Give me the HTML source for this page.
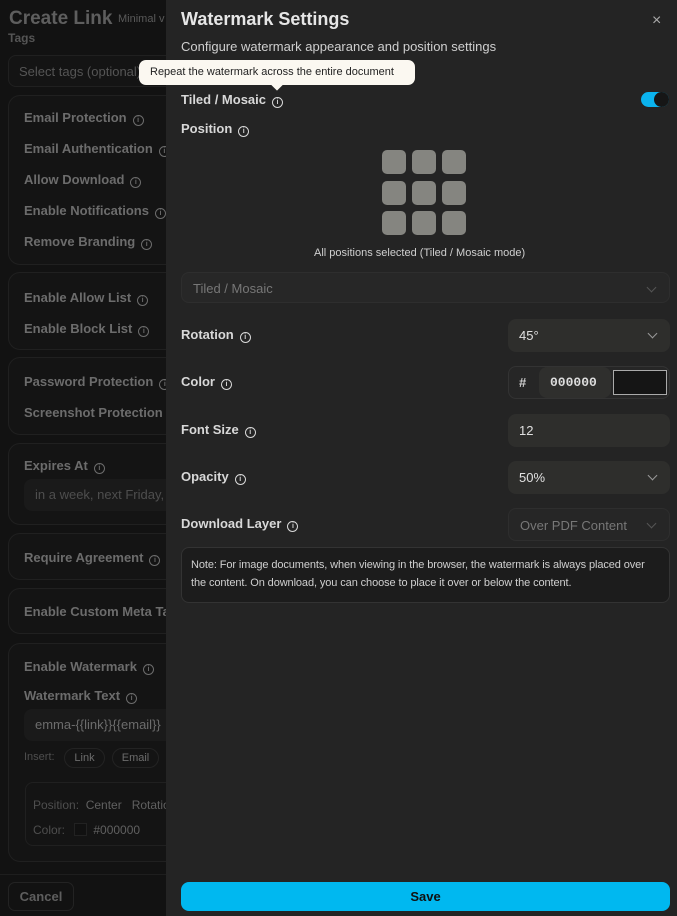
<!DOCTYPE html>
<html><head><meta charset="utf-8"><style>
*{box-sizing:border-box;margin:0;padding:0}
body{width:677px;height:916px;overflow:hidden;background:#121212;font-family:"Liberation Sans",sans-serif;position:relative}
.a{position:absolute;white-space:nowrap}
.card{position:absolute;left:8px;width:200px;border:1px solid #202020;border-radius:12px;background:#141414}
.lt{color:#6c6c6c;font-size:13px;font-weight:bold}
.i{display:inline-block;width:11px;height:11px;border:1px solid currentColor;border-radius:50%;vertical-align:-1px;margin-left:6px;font-size:7px;line-height:9px;text-align:center;font-weight:bold;position:relative;top:-1px}
.panel{position:absolute;left:166px;top:0;width:511px;height:916px;background:#242424}
.pl{color:#d8d8d8;font-size:13px;font-weight:bold}
.sel{position:absolute;left:508px;width:162px;height:33px;border-radius:8px;background:#2e2e2c;color:#e0e0e0;font-size:13px;padding:9px 11px}
.chev{position:absolute;right:14px;top:11px;width:7px;height:7px;border-right:1.3px solid #999;border-bottom:1.3px solid #999;transform:rotate(45deg)}
</style></head><body>
<div class="a" style="left:9px;top:8px;font-size:19px;font-weight:bold;color:#5e5e5e">Create Link</div>
<div class="a" style="left:118px;top:13px;font-size:11px;color:#5a5a5a">Minimal v</div>
<div class="a" style="left:8px;top:31px;font-size:12px;color:#555;font-weight:bold">Tags</div>
<div class="card" style="top:55px;height:32px;border-radius:8px"><div class="a" style="left:10px;top:8px;font-size:13px;color:#555">Select tags (optional)</div></div>
<div class="card" style="top:95px;height:170px">
<div class="a lt" style="left:15px;top:14px">Email Protection<span class="i">i</span></div>
<div class="a lt" style="left:15px;top:45px">Email Authentication<span class="i">i</span></div>
<div class="a lt" style="left:15px;top:76px">Allow Download<span class="i">i</span></div>
<div class="a lt" style="left:15px;top:107px">Enable Notifications<span class="i">i</span></div>
<div class="a lt" style="left:15px;top:138px">Remove Branding<span class="i">i</span></div></div>
<div class="card" style="top:272px;height:78px">
<div class="a lt" style="left:15px;top:17px">Enable Allow List<span class="i">i</span></div>
<div class="a lt" style="left:15px;top:48px">Enable Block List<span class="i">i</span></div></div>
<div class="card" style="top:357px;height:78px">
<div class="a lt" style="left:15px;top:16px">Password Protection<span class="i">i</span></div>
<div class="a lt" style="left:15px;top:47px">Screenshot Protection<span class="i">i</span></div></div>
<div class="card" style="top:443px;height:82px">
<div class="a lt" style="left:15px;top:14px">Expires At<span class="i">i</span></div>
<div class="a" style="left:15px;top:35px;width:190px;height:32px;background:#1a1a1a;border-radius:8px;color:#4e4e4e;font-size:13px;padding:8px 11px">in a week, next Friday, ...</div></div>
<div class="card" style="top:533px;height:47px"><div class="a lt" style="left:15px;top:16px">Require Agreement<span class="i">i</span></div></div>
<div class="card" style="top:588px;height:46px"><div class="a lt" style="left:15px;top:15px">Enable Custom Meta Tags</div></div>
<div class="card" style="top:643px;height:219px">
<div class="a lt" style="left:15px;top:15px">Enable Watermark<span class="i">i</span></div>
<div class="a lt" style="left:15px;top:44px">Watermark Text<span class="i">i</span></div>
<div class="a" style="left:15px;top:65px;width:190px;height:32px;background:#1a1a1a;border-radius:8px;color:#6c6c6c;font-size:13px;padding:8px 11px">emma-{{link}}{{email}}</div>
<div class="a" style="left:15px;top:107px;color:#4e4e4e;font-size:11px">Insert:</div>
<div class="a" style="left:55px;top:104px;width:41px;height:20px;border:1px solid #232323;border-radius:10px;color:#6c6c6c;font-size:11px;text-align:center;line-height:18px">Link</div>
<div class="a" style="left:103px;top:104px;width:47px;height:20px;border:1px solid #232323;border-radius:10px;color:#6c6c6c;font-size:11px;text-align:center;line-height:18px">Email</div>
<div class="a" style="left:16px;top:138px;width:190px;height:64px;border:1px solid #202020;border-radius:8px">
<div class="a" style="left:7px;top:15px;font-size:12px;color:#4e4e4e">Position: <b style="color:#606060;font-weight:normal">&nbsp;Center &nbsp; Rotation</b></div>
<div class="a" style="left:7px;top:40px;font-size:12px;color:#4e4e4e">Color: <span style="display:inline-block;width:13px;height:13px;background:#111;border:1px solid #222;vertical-align:-2px;margin:0 6px"></span><span style="color:#606060">#000000</span></div></div></div>
<div class="a" style="left:0;top:874px;width:166px;border-top:1px solid #1e1e1e"></div>
<div class="a" style="left:8px;top:882px;width:66px;height:29px;border:1px solid #232323;border-radius:7px;color:#5e5e5e;font-size:13px;font-weight:bold;text-align:center;line-height:27px">Cancel</div>

<div class="panel">
<div class="a" style="left:15px;top:9px;font-size:18px;font-weight:bold;color:#e6e6e6">Watermark Settings</div>
<div class="a" style="left:486px;top:12px;color:#aaa;font-size:16px">×</div>
<div class="a" style="left:15px;top:39px;font-size:13px;color:#cfcfcf">Configure watermark appearance and position settings</div>
<div class="a pl" style="left:15px;top:92px">Tiled / Mosaic<span class="i">i</span></div>
<div class="a" style="left:475px;top:92px;width:28px;height:15px;border-radius:8px;background:#0bb3ee"><div style="position:absolute;right:0;top:0;width:15px;height:15px;border-radius:50%;background:#161616"></div></div>
<div class="a pl" style="left:15px;top:121px">Position<span class="i">i</span></div>
<div class="a" style="left:216px;top:150px;width:86px;height:86px;display:grid;grid-template-columns:repeat(3,24px);grid-gap:6px 6px">
<div style="background:#858580;border-radius:5px;height:24px"></div><div style="background:#858580;border-radius:5px;height:24px"></div><div style="background:#858580;border-radius:5px;height:24px"></div><div style="background:#858580;border-radius:5px;height:24px"></div><div style="background:#858580;border-radius:5px;height:24px"></div><div style="background:#858580;border-radius:5px;height:24px"></div><div style="background:#858580;border-radius:5px;height:24px"></div><div style="background:#858580;border-radius:5px;height:24px"></div><div style="background:#858580;border-radius:5px;height:24px"></div></div>
<div class="a" style="left:148px;top:247px;font-size:11px;color:#cfcfcf">All positions selected (Tiled / Mosaic mode)</div>
<div class="a" style="left:15px;top:272px;width:489px;height:31px;border:1px solid #2e2e2e;border-radius:8px;background:#272727;color:#777;font-size:13px;padding:8px 11px">Tiled / Mosaic<div class="chev" style="border-color:#555"></div></div>
<div class="a pl" style="left:15px;top:327px">Rotation<span class="i">i</span></div>
<div class="a pl" style="left:15px;top:374px">Color<span class="i">i</span></div>
<div class="a pl" style="left:15px;top:422px">Font Size<span class="i">i</span></div>
<div class="a pl" style="left:15px;top:469px">Opacity<span class="i">i</span></div>
<div class="a pl" style="left:15px;top:516px">Download Layer<span class="i">i</span></div>
<div class="a" style="left:15px;top:547px;width:489px;height:56px;border:1px solid #333;border-radius:8px;background:#1c1c1c;color:#cfcfcf;font-size:11px;line-height:18px;padding:8px 9px;white-space:normal;letter-spacing:-0.1px">Note: For image documents, when viewing in the browser, the watermark is always placed over the content. On download, you can choose to place it over or below the content.</div>
<div class="a" style="left:15px;top:882px;width:489px;height:29px;border-radius:8px;background:#00b8f0;color:#111;font-size:13px;font-weight:bold;text-align:center;line-height:29px">Save</div>
</div>
<div class="sel" style="top:319px">45°<div class="chev"></div></div>
<div class="a" style="left:508px;top:366px;width:162px;height:33px;border:1px solid #333;border-radius:8px;background:#262626">
<div class="a" style="left:10px;top:8px;color:#ccc;font-size:13px;font-weight:bold">#</div>
<div class="a" style="left:30px;top:0;width:72px;height:31px;background:#2f2f2d;border-radius:8px;color:#ddd;font-family:'Liberation Mono',monospace;font-size:13px;font-weight:bold;padding:8px 11px">000000</div>
<div class="a" style="left:104px;top:3px;width:54px;height:25px;background:#151515;border:1px solid #aaa"></div></div>
<div class="sel" style="top:414px">12</div>
<div class="sel" style="top:461px">50%<div class="chev"></div></div>
<div class="sel" style="top:508px;background:#262626;border:1px solid #2e2e2e;color:#777">Over PDF Content<div class="chev" style="border-color:#555"></div></div>
<div class="a" style="left:139px;top:60px;width:276px;height:25px;border-radius:7px;background:#fbf8f1;color:#222;font-size:11px;padding:6px 11px">Repeat the watermark across the entire document</div>
<div class="a" style="left:273px;top:81px;width:8px;height:8px;background:#fbf8f1;transform:rotate(45deg)"></div>
</body></html>
